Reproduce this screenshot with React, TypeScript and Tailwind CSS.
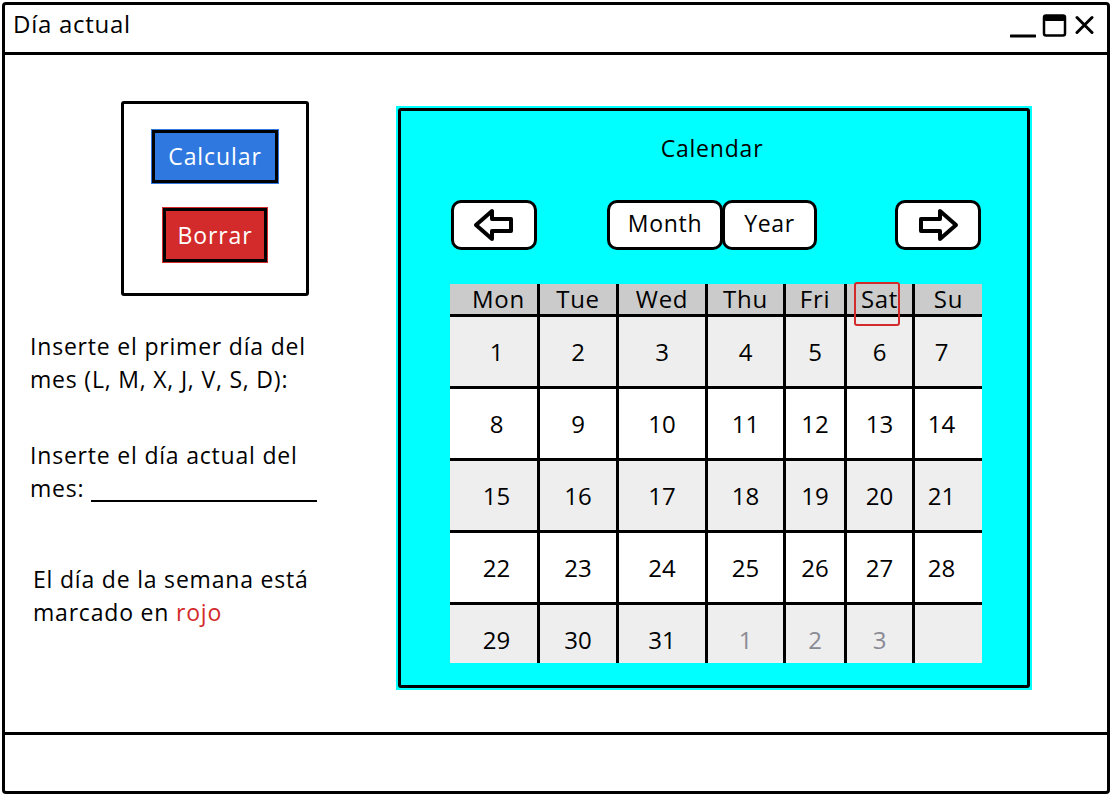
import React from "react";

const font = { fontFamily: "'Open Sans', 'Noto Sans', sans-serif" };

const cols = ["Mon", "Tue", "Wed", "Thu", "Fri", "Sat", "Su"];
const rows: { n: string; muted?: boolean }[][] = [
  ["1", "2", "3", "4", "5", "6", "7"].map((n) => ({ n })),
  ["8", "9", "10", "11", "12", "13", "14"].map((n) => ({ n })),
  ["15", "16", "17", "18", "19", "20", "21"].map((n) => ({ n })),
  ["22", "23", "24", "25", "26", "27", "28"].map((n) => ({ n })),
  [
    { n: "29" },
    { n: "30" },
    { n: "31" },
    { n: "1", muted: true },
    { n: "2", muted: true },
    { n: "3", muted: true },
    { n: "" },
  ],
];

function Arrow({ dir }: { dir: "left" | "right" }) {
  return (
    <svg width="42" height="36" viewBox="0 0 42 36" className={dir === "right" ? "-scale-x-100" : ""}>
      <path
        d="M3 18 L19 4 L19 12 L38 12 L38 24 L19 24 L19 32 Z"
        fill="white"
        stroke="black"
        strokeWidth="4"
        strokeLinejoin="round"
      />
    </svg>
  );
}

export default function App() {
  return (
    <div className="w-[1112px] h-[796px] bg-white p-[2px] text-black tracking-[0.05em]" style={font}>
      <div className="w-full h-full border-[3px] border-black rounded-[4px] flex flex-col">
        {/* Title bar */}
        <div className="h-[50px] border-b-[3px] border-black flex items-start justify-between pl-[8px] pr-[13px]">
          <div className="pt-[4px] text-[24px] leading-[30px] tracking-[0.03em]">Día actual</div>
          <div className="flex items-center gap-[6px] pt-[8px]">
            <svg width="26" height="26" viewBox="0 0 26 26">
              <line x1="1" y1="23" x2="25" y2="23" stroke="black" strokeWidth="3" strokeLinecap="round" />
            </svg>
            <svg width="26" height="26" viewBox="0 0 26 26">
              <rect x="2" y="2.5" width="21" height="20" rx="2" fill="white" stroke="black" strokeWidth="2.5" />
              <rect x="2" y="2" width="21" height="6" rx="2" fill="black" />
            </svg>
            <svg width="20" height="26" viewBox="0 0 20 26">
              <path d="M3 4.5 L18 19.5 M18 4.5 L3 19.5" stroke="black" strokeWidth="3" strokeLinecap="round" />
            </svg>
          </div>
        </div>

        {/* Body */}
        <div className="flex-1 flex">
          <div className="w-[391px] flex flex-col">
            <div className="ml-[116px] mt-[46px] w-[188px] h-[195px] border-[3px] border-black rounded-[3px] flex flex-col items-center pt-[26px]">
              <button className="w-[126px] h-[53px] bg-[#2f78e0] border-[3px] border-black shadow-[0_0_0_1px_#2f78e0] text-white text-[23px] leading-none tracking-[0.04em] flex items-center justify-center">
                Calcular
              </button>
              <button className="mt-[25px] w-[104px] h-[54px] bg-[#d32b2b] border-[3px] border-black shadow-[0_0_0_1px_#d32b2b] text-white text-[23px] leading-none tracking-[0.04em] flex items-center justify-center">
                Borrar
              </button>
            </div>
            <div className="pl-[25px] mt-[34px] text-[23px] leading-[33px]">
              Inserte el primer día del
              <br />
              mes (L, M, X, J, V, S, D):
            </div>
            <div className="pl-[25px] mt-[43px] text-[23px] leading-[33px]">
              Inserte el día actual del
              <br />
              mes:{" "}
              <span className="inline-block w-[226px] h-[20px] border-b-2 border-black align-[-5px]"></span>
            </div>
            <div className="pl-[28px] mt-[58px] text-[23px] leading-[33px]">
              El día de la semana está
              <br />
              marcado en <span className="text-[#d32b2b]">rojo</span>
            </div>
          </div>

          {/* Calendar */}
          <div className="mt-[51px] w-[636px] h-[584px] bg-[#00ffff] p-[2px]">
            <div className="w-full h-full border-[3px] border-black rounded-[3px] flex flex-col">
              <div className="mt-[23px] text-center text-[23px] leading-[28px] pr-[4px]">Calendar</div>
              <div className="mt-[38px] ml-[50px] flex items-center">
                <button className="w-[86px] h-[50px] bg-white border-[3px] border-black rounded-[10px] flex items-center justify-center">
                  <Arrow dir="left" />
                </button>
                <div className="ml-[70px] flex">
                  <button className="w-[116px] h-[50px] bg-white border-[3px] border-black rounded-[10px] text-[23px] leading-none tracking-[0.03em] flex items-center justify-center pb-[3px]">
                    Month
                  </button>
                  <button className="-ml-[1px] w-[95px] h-[50px] bg-white border-[3px] border-black rounded-[10px] text-[23px] leading-none tracking-[0.03em] flex items-center justify-center pb-[3px]">
                    Year
                  </button>
                </div>
                <button className="ml-[78px] w-[86px] h-[50px] bg-white border-[3px] border-black rounded-[10px] flex items-center justify-center">
                  <Arrow dir="right" />
                </button>
              </div>

              <div className="mt-[34px] ml-[49px] w-[532px] flex flex-col">
                <div className="grid grid-cols-[90px_79px_89px_78px_61px_68px_67px] h-[33px] bg-[#cbcbcb] border-b-[3px] border-black">
                  {cols.map((c, i) => (
                    <div
                      key={c}
                      className={
                        "relative flex items-center justify-center text-[24px] leading-none tracking-[0.03em] " +
                        (i === 0 ? "pl-[10px] " : "") +
                        (i < 6 ? "border-r-[3px] border-black" : "")
                      }
                    >
                      {c}
                      {c === "Sat" && (
                        <div className="absolute left-[7px] top-[-2px] w-[46px] h-[44px] border-2 border-[#d32b2b] rounded-[3px] z-10"></div>
                      )}
                    </div>
                  ))}
                </div>
                {rows.map((r, ri) => (
                  <div
                    key={ri}
                    className={
                      "grid grid-cols-[90px_79px_89px_78px_61px_68px_67px] " +
                      (ri === 4 ? "h-[58px] " : "h-[72px] border-b-[3px] border-black ") +
                      (ri % 2 === 0 ? "bg-[#eeeeee]" : "bg-white")
                    }
                  >
                    {r.map((c, ci) => (
                      <div
                        key={ci}
                        className={
                          "flex items-center justify-center text-[24px] leading-none tracking-normal " +
                          (ri === 4 ? "pt-[12px] " : "") +
                          (ci === 0 ? "pl-[6px] " : "") +
                          (ci === 6 ? "pr-[14px] " : "") +
                          (ci < 6 ? "border-r-[3px] border-black " : "") +
                          (c.muted ? "text-[#8a8a95]" : "")
                        }
                      >
                        {c.n}
                      </div>
                    ))}
                  </div>
                ))}
              </div>
            </div>
          </div>
        </div>

        {/* Footer */}
        <div className="h-[59px] border-t-[3px] border-black"></div>
      </div>
    </div>
  );
}
